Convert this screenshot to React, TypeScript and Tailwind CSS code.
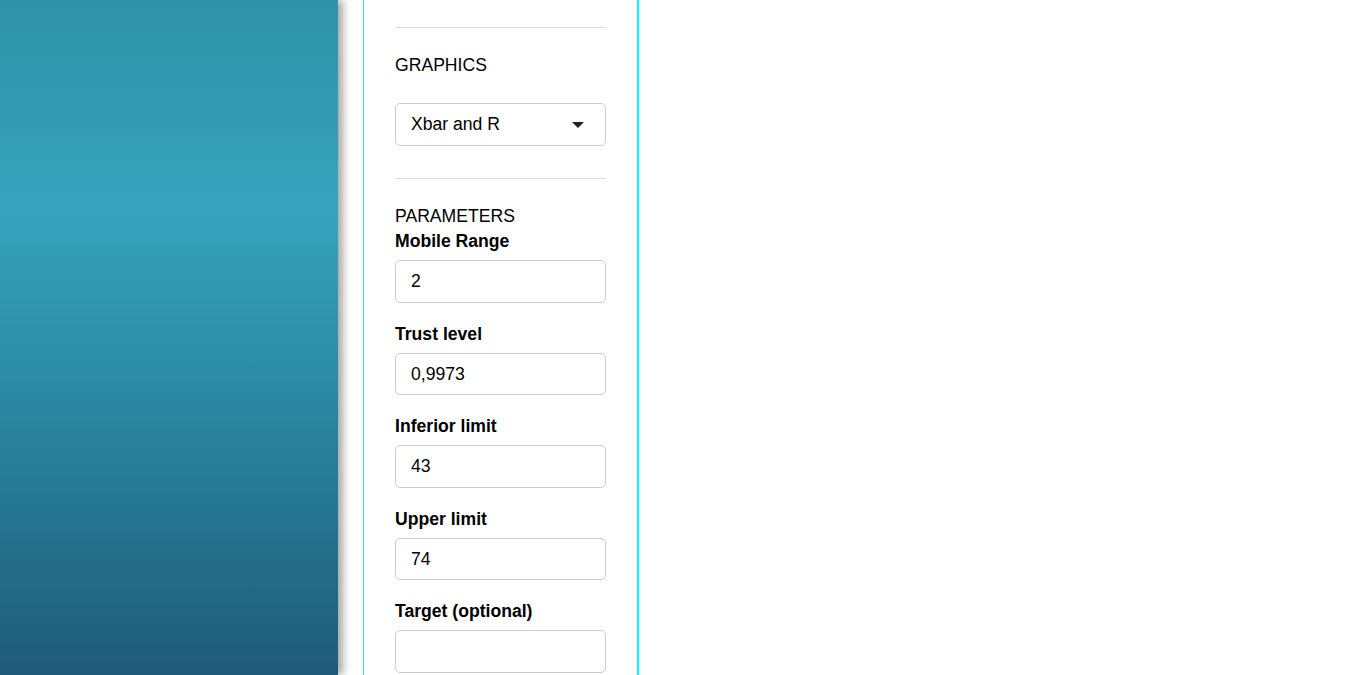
import React from 'react'

const fields = [
  { label: 'Mobile Range', value: '2' },
  { label: 'Trust level', value: '0,9973' },
  { label: 'Inferior limit', value: '43' },
  { label: 'Upper limit', value: '74' },
  { label: 'Target (optional)', value: '' },
]

export default function App() {
  return (
    <div
      className="flex h-[675px] overflow-hidden bg-white text-black"
      style={{ fontFamily: '"Liberation Sans", Arial, sans-serif' }}
    >
      <div className="w-[338px] shrink-0 bg-[linear-gradient(to_bottom,#2e93a8_0%,#37a3bc_31%,#2b89a3_58%,#1f5b78_100%)] shadow-[5px_0_8px_rgba(0,0,0,0.35)]" />

      <div className="ml-[25px] w-[276px] shrink-0 border-l border-l-[#3fdfd0] border-r-2 border-r-[#00ffff] px-[31px] pt-[27px] text-[17.6px]">
        <div className="border-t border-[#dddddd]" />

        <div className="mt-[25px] leading-6">GRAPHICS</div>

        <div className="mt-[26px] flex h-[43px] items-center justify-between rounded-[5px] border border-[#cccccc] pl-[15px] pr-[21px]">
          <span>Xbar and R</span>
          <span className="h-0 w-0 border-x-[6px] border-t-[6px] border-x-transparent border-t-[#222]" />
        </div>

        <div className="mt-[32px] border-t border-[#dddddd]" />

        <div className="mt-[25px] leading-6">PARAMETERS</div>

        <div className="flex flex-col">
          {fields.map((f) => (
            <div key={f.label} className="mb-[18px] flex flex-col">
              <label className="mb-[6px] font-bold leading-[26px]">{f.label}</label>
              <div className="flex h-[42.5px] items-center rounded-[5px] border border-[#cccccc] px-[15px]">
                {f.value}
              </div>
            </div>
          ))}
        </div>
      </div>

      <div className="flex-1" />
    </div>
  )
}
